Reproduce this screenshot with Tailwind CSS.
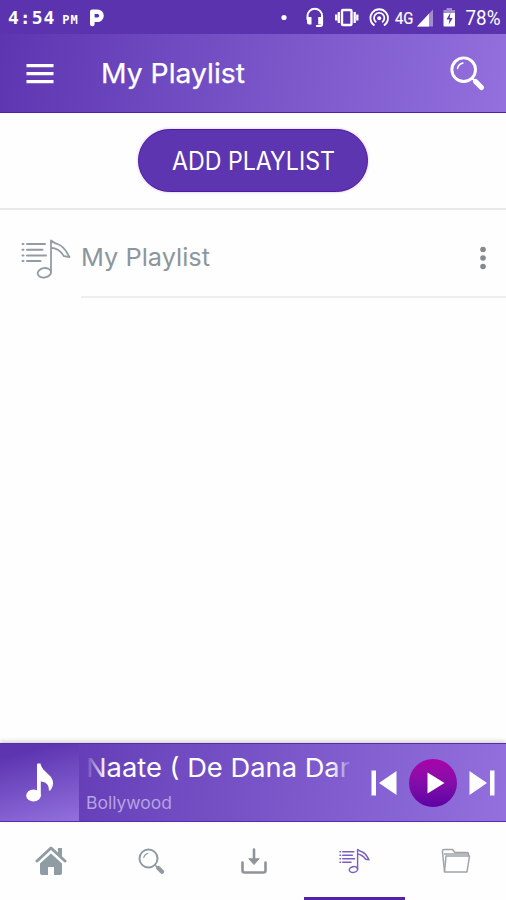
<!DOCTYPE html>
<html lang="en">
<head>
    <meta charset="UTF-8">
    <meta name="viewport" content="width=device-width, initial-scale=1.0">
    <title>My Playlist</title>
    <script src="https://cdn.jsdelivr.net/npm/@tailwindcss/browser@4"></script>
</head>
<body class="bg-white font-['Inter',sans-serif]">
    <div class="w-[506px] h-[900px] flex flex-col overflow-hidden bg-[#fefefe]">
        <!-- Status bar -->
        <div class="h-[34px] shrink-0 bg-[#5c33ae] text-white flex items-center pl-[8px] pr-[5px]">
            <span class="font-['DejaVu_Sans_Mono',monospace] font-bold text-[18px] leading-none tracking-[1px] whitespace-nowrap mt-[2px]">4:54</span>
            <span class="font-['DejaVu_Sans_Mono',monospace] font-bold text-[12px] leading-none tracking-[1px] ml-[7px] mt-[6px]">PM</span>
            <svg class="ml-[10px] shrink-0" width="16" height="19" viewBox="0 0 16 19" fill="none">
                <path d="M3.300 16V3.800H8.500a4 4 0 0 1 0 8H3.300" stroke="white" stroke-width="4.600" stroke-linecap="round" stroke-linejoin="round" />
            </svg>
            <div class="flex-1"></div>
            <svg class="shrink-0" width="222" height="34" viewBox="279 0 222 34" fill="none" stroke="white">
                <circle cx="284" cy="17.500" r="2.600" fill="white" stroke="none" />
                <!-- Headset -->
                <path d="M307.500 20v-4a7.300 7.300 0 0 1 14.600 0v8q0 2-2 2h-4" stroke-width="2" />
                <path d="M307 17h4.500v7.500H309q-2 0-2-2zM318.200 17h4.500v7.500h-4.500z" fill="white" stroke="none" />
                <!-- Vibrate -->
                <rect x="342" y="10" width="9.500" height="15" rx="1" stroke-width="2.400" />
                <path d="M338.800 12v11M336.200 14.500v6M354.700 12v11M357.300 14.500v6" stroke-width="2.300" />
                <!-- Hotspot -->
                <path d="M374.500 25.500a8.800 8.800 0 1 1 9.400 0M376.300 22.300a5.200 5.200 0 1 1 5.800 0" stroke-width="1.800" />
                <circle cx="379.200" cy="18.300" r="2" fill="white" stroke="none" />
                <text x="395" y="24" font-family="Roboto, sans-serif" font-size="17" textLength="18.500" lengthAdjust="spacingAndGlyphs" fill="white" stroke="white" stroke-width=".2">4G</text>
                <!-- Signal -->
                <path d="M417 26.500L433 9.500v17z" fill="#a38ad2" stroke="none" />
                <path d="M417 26.500L429 13.700v12.800z" fill="white" stroke="none" />
                <!-- Battery -->
                <path d="M446.500 8h5.500v2h3v4h-11.500v-4h3z" fill="#a38ad2" stroke="none" />
                <path d="M443.500 13h11.500v12.500q0 1-1 1h-9.500q-1 0-1-1z" fill="white" stroke="none" />
                <path d="M450.500 12.500l-4 7h3l-.8 5 4-6.500h-3z" fill="#5c33ae" stroke="none" />
                <text x="465.500" y="24.500" font-family="Roboto, sans-serif" font-size="20" textLength="35" lengthAdjust="spacingAndGlyphs" fill="white" stroke="none">78%</text>
            </svg>
        </div>

        <!-- Toolbar -->
        <header class="h-[79px] shrink-0 flex items-center bg-linear-100 from-[#5e35b1] to-[#9370dd] border-b border-[#5520a8] text-white pl-[26px] pr-[20px]">
            <svg class="shrink-0 mt-[1px]" width="28" height="20" viewBox="0 0 28 20" fill="white">
                <path d="M.5 0h27v3.300H.5zM.5 8h27v3.300H.5zM.5 16h27v3.300H.5z" />
            </svg>
            <h1 class="ml-[47px] flex-1 leading-none">
                <svg width="160" height="36" viewBox="0 0 160 36" class="block">
                    <text x="0" y="27.500" font-size="27.500" textLength="144" lengthAdjust="spacingAndGlyphs" fill="white" stroke="white" stroke-width=".25">My Playlist</text>
                </svg>
            </h1>
            <svg class="shrink-0 mt-[2px]" width="36" height="36" viewBox="0 0 36 36" fill="none" stroke="white" stroke-linecap="round">
                <circle cx="13.700" cy="13.700" r="11.800" stroke-width="2.900" />
                <path d="M7.500 12.500q1-4.500 5.500-5.500" stroke-width="1.500" />
                <path d="M22 22l2.500 2.500" stroke-width="2" />
                <path d="M25.500 25.500l6 6" stroke-width="5.200" />
            </svg>
        </header>

        <!-- Add button -->
        <div class="h-[97px] shrink-0 border-b-2 border-[#e9e9e9] flex justify-center items-start pt-4">
            <button class="w-[230px] h-[63px] rounded-full bg-[#5e35b1] border border-[#5018a5] shadow-[0_0_3px_#cdbfe8] flex items-center justify-center">
                <svg width="184" height="40" viewBox="0 0 184 40">
                    <text x="11" y="28.500" font-size="25" textLength="163" lengthAdjust="spacingAndGlyphs" fill="white">ADD PLAYLIST</text>
                </svg>
            </button>
        </div>

        <!-- Playlist rows -->
        <main class="flex-1">
            <div class="h-[88px] flex pl-[21px]">
                <svg class="mt-[28px] shrink-0" width="50" height="42" viewBox="0 0 50 42" fill="none" stroke="#929ca3" stroke-width="1.800" stroke-linecap="round" stroke-linejoin="round">
                    <path d="M1.500 6h1M6 6h18M1.500 11.700h1M6 11.700h15.500M1.500 17.400h1M6 17.400h19M1.500 23h1M6 23h13.500" stroke-width="2" />
                    <path d="M30 34.500V2.500q3 2.500 7.500 4c6 2 7.500 7 11 12.500q-3-.2-5.500-.8c-4-6-7-7.500-13-8.500" />
                    <ellipse cx="23.300" cy="34.800" rx="6.700" ry="4.700" transform="rotate(-10 23.300 34.800)" />
                </svg>
                <div class="ml-[10px] flex-1 flex items-center border-b-2 border-[#eeeeee] pr-[19px]">
                    <svg class="mt-[8px]" width="145" height="36" viewBox="0 0 145 36">
                        <text x="0" y="27" font-size="24.500" textLength="129" lengthAdjust="spacingAndGlyphs" fill="#8d969d">My Playlist</text>
                    </svg>
                    <svg class="ml-auto mt-[10px]" width="8" height="24" viewBox="0 0 8 24" fill="#858a8e">
                        <circle cx="4" cy="3.500" r="2.800" />
                        <circle cx="4" cy="12" r="2.800" />
                        <circle cx="4" cy="20.500" r="2.800" />
                    </svg>
                </div>
            </div>
        </main>

        <!-- Mini player -->
        <div class="h-[79px] shrink-0 flex bg-linear-100 from-[#5e35b1] to-[#9370dd] border-y border-[#5a2bab] shadow-[0_-2px_4px_#d8d5d2]">
            <div class="w-[79px] bg-linear-165 from-[#5e35b1] from-15% to-[#9370dd] flex items-center justify-center">
                <svg width="28" height="40" viewBox="0 0 28 40" fill="white">
                    <ellipse cx="7.500" cy="32.500" rx="7.300" ry="6" />
                    <path d="M11 33V1.500Q11 .5 12 .5h2.500c1 5 4 7 8 11 6 5 5.500 11 1.800 16h-1.500c.5-6-3-8.500-8-9v15z" />
                </svg>
            </div>
            <div class="w-[285px] pl-[7px] pt-[5px]">
                <svg width="268" height="38" viewBox="0 0 268 38" class="block">
                    <defs>
                        <linearGradient id="fade" gradientUnits="userSpaceOnUse" x1="0" y1="0" x2="264" y2="0">
                            <stop offset="0" stop-color="white" stop-opacity="0" />
                            <stop offset=".075" stop-color="white" />
                            <stop offset=".93" stop-color="white" />
                            <stop offset="1" stop-color="white" stop-opacity=".15" />
                        </linearGradient>
                    </defs>
                    <text x="0" y="28" font-size="26" textLength="264" lengthAdjust="spacingAndGlyphs" fill="url(#fade)">Naate ( De Dana Dar</text>
                </svg>
                <svg width="100" height="28" viewBox="0 0 100 28" class="block">
                    <text x="0" y="21.500" font-size="17" textLength="86" lengthAdjust="spacingAndGlyphs" fill="#b7a2e3">Bollywood</text>
                </svg>
            </div>
            <div class="flex-1 flex items-center justify-between pl-[7px] pr-[11px]">
                <svg width="26" height="26" viewBox="0 0 26 26" fill="white">
                    <path d="M.5.500h4.500v25H.500zM25.500 1v24L8 13z" />
                </svg>
                <div class="size-[48px] rounded-full bg-linear-to-b from-[#aa00aa] to-[#5e00a5] flex items-center justify-center pl-[5px]">
                    <svg width="18" height="22" viewBox="0 0 18 22" fill="white">
                        <path d="M.5.500L17.500 11 .5 21.500z" />
                    </svg>
                </div>
                <svg width="26" height="26" viewBox="0 0 26 26" fill="white">
                    <path d="M21 .500h4.500v25H21zM.500 1v24L18 13z" />
                </svg>
            </div>
        </div>

        <!-- Bottom tabs -->
        <nav class="h-[78px] shrink-0 grid grid-cols-5">
            <div class="flex items-center justify-center pb-[2px]">
                <svg width="32" height="32" viewBox="0 0 32 32" fill="#909ca3">
                    <path d="M2 17L16 4l14 13" fill="none" stroke="#909ca3" stroke-width="3" stroke-linecap="round" stroke-linejoin="round" />
                    <path d="M23 4h4v9l-4-3.500z" />
                    <path d="M16 9.500L27 19.500V29q0 2-2 2h-6v-8h-6v8H7q-2 0-2-2v-9.500z" />
                </svg>
            </div>
            <div class="flex items-center justify-center">
                <svg width="27" height="27" viewBox="0 0 26 27" fill="none" stroke="#909ba1" stroke-linecap="round">
                    <circle cx="10" cy="10.500" r="9" stroke-width="2" />
                    <path d="M5.300 9.500q.7-3.300 4-4" stroke-width="1.200" />
                    <path d="M16.500 17l2 2" stroke-width="1.500" />
                    <path d="M19.800 20l3.700 3.700" stroke-width="4.300" />
                </svg>
            </div>
            <div class="flex items-center justify-center pl-[2px]">
                <svg width="28" height="28" viewBox="0 0 28 28" fill="none" stroke="#909499" stroke-width="2.600" stroke-linecap="round" stroke-linejoin="round">
                    <path d="M2.500 15.500v8q0 2 2 2h19q2 0 2-2v-8" />
                    <path d="M14 2.500v12" />
                    <path d="M9 12l5 5.500 5-5.500z" fill="#909499" stroke-width="1" />
                </svg>
            </div>
            <div class="relative flex items-center justify-center">
                <svg width="31" height="26" viewBox="0 0 50 42" fill="none" stroke="#7a5fbd" stroke-width="2.300" stroke-linecap="round" stroke-linejoin="round">
                    <path d="M1.500 6h1M6 6h18M1.500 11.700h1M6 11.700h15.500M1.500 17.400h1M6 17.400h19M1.500 23h1M6 23h13.500" />
                    <path d="M30 34.500V2.500q3 2.500 7.500 4c6 2 7.500 7 11 12.500q-3-.2-5.500-.8c-4-6-7-7.500-13-8.500" />
                    <ellipse cx="23.300" cy="34.800" rx="6.700" ry="4.700" transform="rotate(-10 23.300 34.800)" />
                </svg>
                <div class="absolute bottom-0 inset-x-0 h-[3px] bg-[#5423a7]"></div>
            </div>
            <div class="flex items-center justify-center pl-[2px]">
                <svg width="30" height="26" viewBox="0 0 30 26" fill="none" stroke="#a0a4a6" stroke-width="1.500" stroke-linejoin="round">
                    <path d="M3.500 23.500L1.500 4V3q0-1.500 1.500-1.500h8.500l2.500 3h12q1.500 0 1.500 1.500v2" />
                    <path d="M5 8h23.500L26 24H3.500zM3 6h24" />
                </svg>
            </div>
        </nav>
    </div>
</body>
</html>
